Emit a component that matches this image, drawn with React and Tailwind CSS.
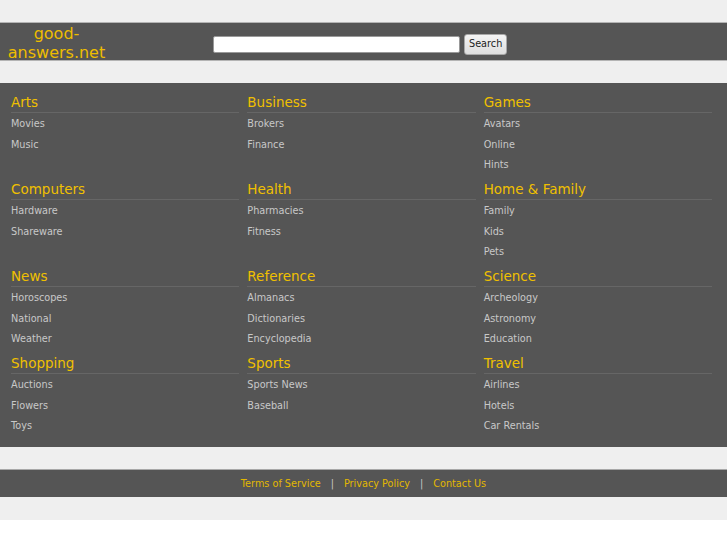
const SECTIONS = [
  { title: 'Arts', links: ['Movies', 'Music'] },
  { title: 'Business', links: ['Brokers', 'Finance'] },
  { title: 'Games', links: ['Avatars', 'Online', 'Hints'] },
  { title: 'Computers', links: ['Hardware', 'Shareware'] },
  { title: 'Health', links: ['Pharmacies', 'Fitness'] },
  { title: 'Home & Family', links: ['Family', 'Kids', 'Pets'] },
  { title: 'News', links: ['Horoscopes', 'National', 'Weather'] },
  { title: 'Reference', links: ['Almanacs', 'Dictionaries', 'Encyclopedia'] },
  { title: 'Science', links: ['Archeology', 'Astronomy', 'Education'] },
  { title: 'Shopping', links: ['Auctions', 'Flowers', 'Toys'] },
  { title: 'Sports', links: ['Sports News', 'Baseball'] },
  { title: 'Travel', links: ['Airlines', 'Hotels', 'Car Rentals'] },
]

const FOOTER_LINKS = ['Terms of Service', 'Privacy Policy', 'Contact Us']

function Header() {
  return (
    <div className="flex items-start h-[39px] bg-[#555555] border-y border-[#b4b4b4]">
      <a href="#" className="block w-[113px] pt-[1px] text-center text-[16px] leading-[19px] text-[#eebd00]">
        good-answers.net
      </a>
      <form className="flex items-center gap-[4px] ml-[100px] mt-[11px]" onSubmit={(e) => e.preventDefault()}>
        <input
          type="text"
          className="w-[247px] h-[17px] bg-white border border-[#999] rounded-[2px] outline-none text-[11px] px-1"
        />
        <button
          type="submit"
          className="h-[21px] px-[4px] text-[9.7px] text-[#222] bg-gradient-to-b from-[#f4f4f4] to-[#dedede] border border-[#a8a8a8] rounded-[3px]"
        >
          Search
        </button>
      </form>
    </div>
  )
}

function Section({ section }) {
  return (
    <div className="pr-2 mb-[4.5px]">
      <h2 className="pb-px text-[13.5px] leading-[18px] text-[#f0c000] border-b border-[#666666]">
        <a href="#">{section.title}</a>
      </h2>
      <div className="pt-px">
        {section.links.map((link) => (
          <a key={link} href="#" className="block text-[9.7px] leading-[20.5px] text-[#c8c8c8]">
            {link}
          </a>
        ))}
      </div>
    </div>
  )
}

export default function App() {
  return (
    <div className="bg-[#efefef] pt-[22px] pb-[23px] font-['DejaVu_Sans',sans-serif]">
      <Header />
      <div className="mt-[22px] bg-[#555555] pl-[11px] pr-[7px] pt-[10px] pb-[6px] grid grid-cols-3">
        {SECTIONS.map((section) => (
          <Section key={section.title} section={section} />
        ))}
      </div>
      <div className="mt-[22px] h-[28px] pt-px bg-[#555555] border-t border-[#a8a8a8] flex items-center justify-center text-[9.7px] text-[#e3b800]">
        {FOOTER_LINKS.map((link, i) => (
          <span key={link} className="flex items-center">
            {i > 0 && <span className="mx-[10px] text-[#c8c8c8]">|</span>}
            <a href="#">{link}</a>
          </span>
        ))}
      </div>
    </div>
  )
}
